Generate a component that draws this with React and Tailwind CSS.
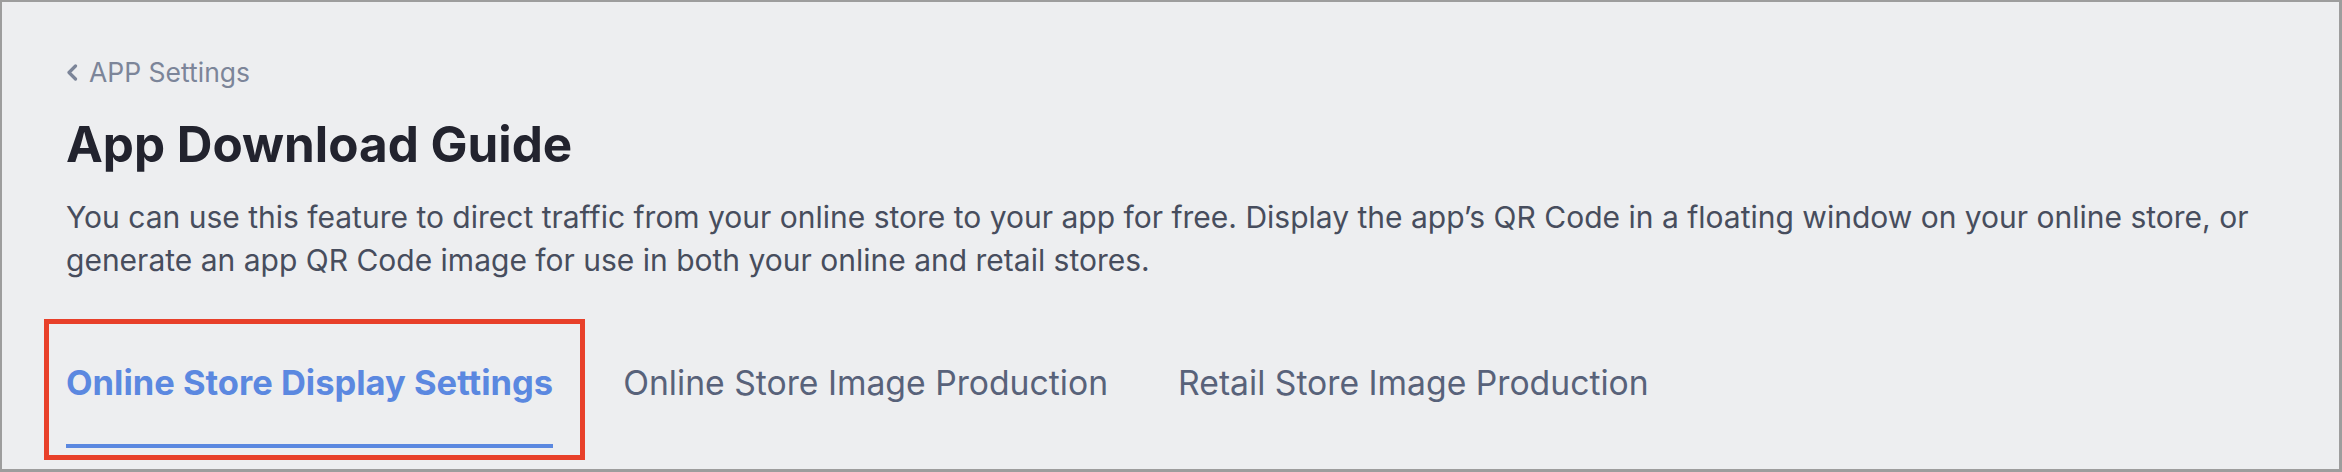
import React from "react";

const tabs = [
  { label: "Online Store Display Settings", active: true },
  { label: "Online Store Image Production", active: false },
  { label: "Retail Store Image Production", active: false },
];

function ChevronLeft() {
  return (
    <svg width="12" height="17" viewBox="0 0 12 17" fill="none" className="shrink-0">
      <path d="M9.5 2 L3 8.5 L9.5 15" stroke="#7c8599" strokeWidth="3.2" strokeLinecap="round" strokeLinejoin="round" />
    </svg>
  );
}

export default function App() {
  return (
    <div className="relative w-[2342px] h-[472px] overflow-hidden bg-[#edeef0] border-t-2 border-l-2 border-r-[3px] border-b-[3px] border-[#9d9d9d] font-['Inter','Noto_Sans',sans-serif]">
      <div className="pl-[64px] pt-[52px]">
        <div className="flex items-center gap-[11px] h-[36px] text-[26.5px] leading-[36px] text-[#7c8599]">
          <ChevronLeft />
          <span>APP Settings</span>
        </div>

        <h1 className="mt-[26px] text-[49.4px] leading-[56px] font-bold text-[#22232e]">
          App Download Guide
        </h1>

        <p className="mt-[24px] text-[30px] leading-[43px] text-[#474d5d] whitespace-nowrap">
          You can use this feature to direct traffic from your online store to your app for free. Display the app’s QR Code in a floating window on your online store, or
          <br />
          generate an app QR Code image for use in both your online and retail stores.
        </p>

        <div className="mt-[81px] flex gap-[70px]">
          {tabs.map((tab) => (
            <div
              key={tab.label}
              className={`pb-[41px] border-b-4 leading-[40px] whitespace-nowrap ${
                tab.active
                  ? "text-[34.5px] border-[#5b88e0] text-[#5b88e0] font-bold"
                  : "text-[33.7px] border-transparent text-[#58627a]"
              }`}
            >
              {tab.label}
            </div>
          ))}
        </div>
      </div>

      {/* annotation box round the active tab */}
      <div className="absolute left-[42px] top-[317px] w-[541px] h-[141px] border-[5px] border-[#e8402a] pointer-events-none" />
    </div>
  );
}
